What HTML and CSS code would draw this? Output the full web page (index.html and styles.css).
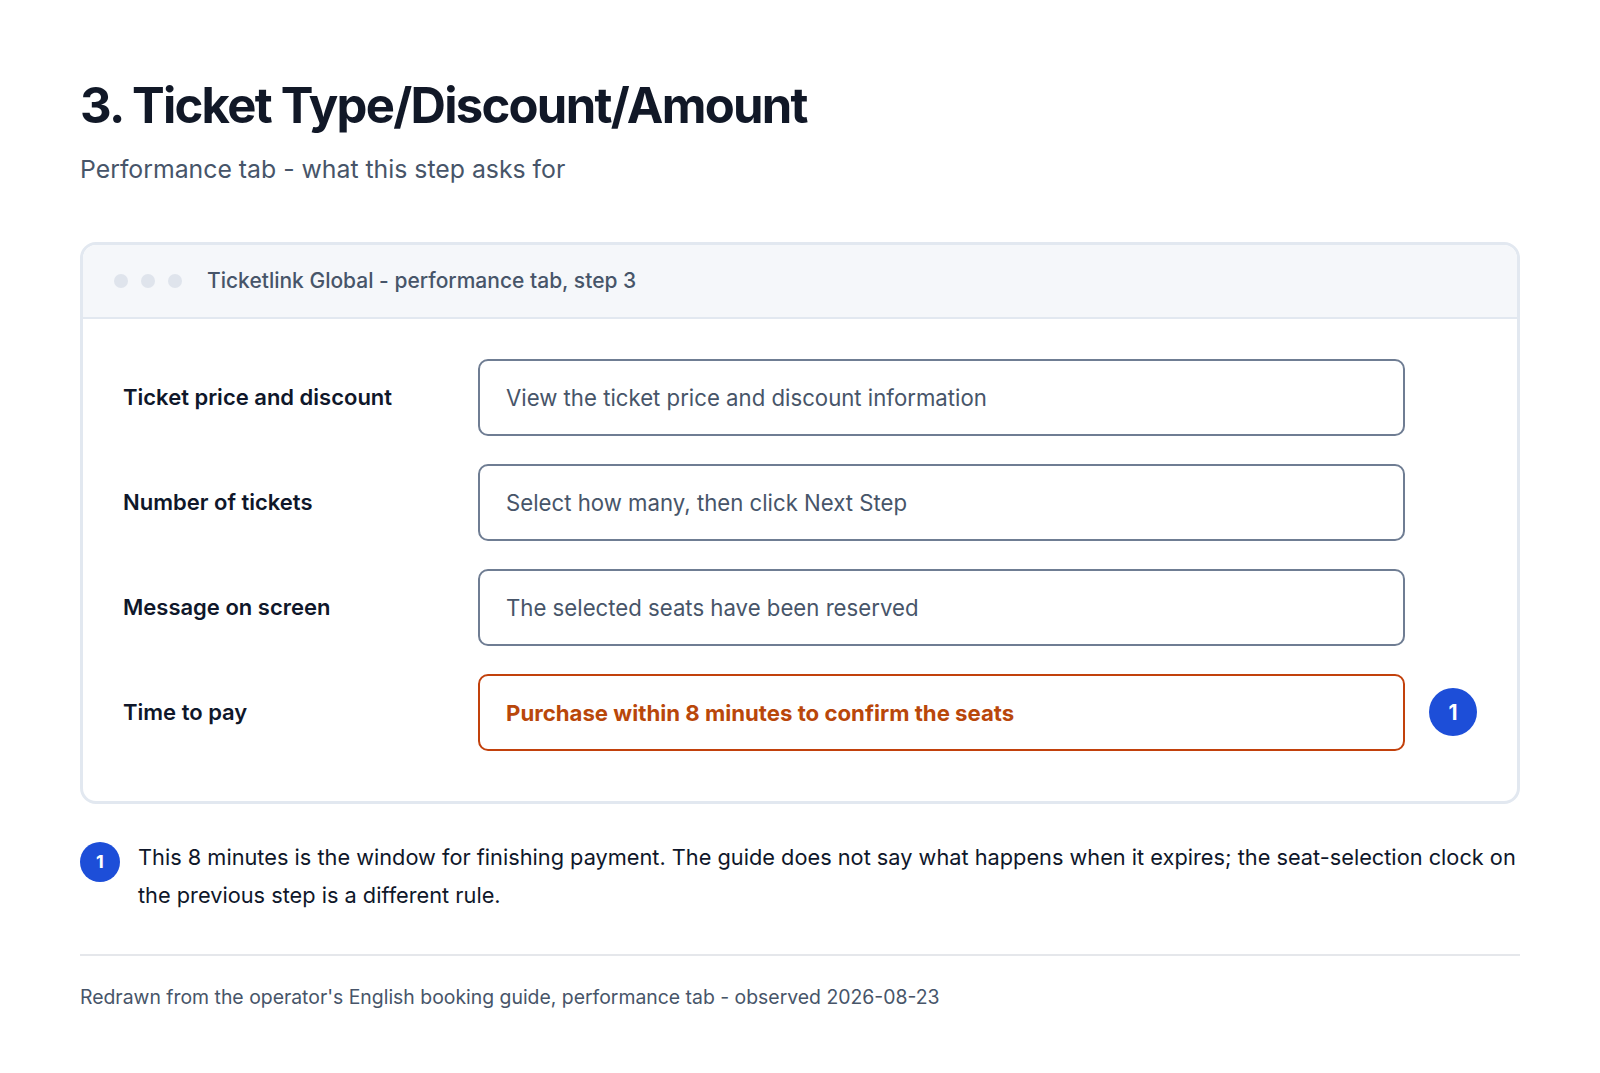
FILE: index.html
```html
<!DOCTYPE html>
<html lang="en">
<head>
    <meta charset="UTF-8">
    <meta name="viewport" content="width=device-width, initial-scale=1.0">
    <title>3. Ticket Type/Discount/Amount</title>
    <link rel="stylesheet" href="styles.css">
</head>
<body>
    <div class="page">
        <h1>3. Ticket Type/Discount/Amount</h1>
        <p class="subtitle">Performance tab - what this step asks for</p>

        <div class="window">
            <div class="window-bar">
                <span class="dot"></span>
                <span class="dot"></span>
                <span class="dot"></span>
                <span class="window-title">Ticketlink Global - performance tab, step 3</span>
            </div>
            <div class="window-body">
                <div class="field-row">
                    <div class="field-label">Ticket price and discount</div>
                    <div class="field-box">View the ticket price and discount information</div>
                    <div></div>
                </div>
                <div class="field-row">
                    <div class="field-label">Number of tickets</div>
                    <div class="field-box">Select how many, then click Next Step</div>
                    <div></div>
                </div>
                <div class="field-row">
                    <div class="field-label">Message on screen</div>
                    <div class="field-box">The selected seats have been reserved</div>
                    <div></div>
                </div>
                <div class="field-row">
                    <div class="field-label">Time to pay</div>
                    <div class="field-box warn">Purchase within 8 minutes to confirm the seats</div>
                    <div class="marker">1</div>
                </div>
            </div>
        </div>

        <div class="note">
            <div class="marker small">1</div>
            <p>This 8 minutes is the window for finishing payment. The guide does not say what happens when it expires; the seat-selection clock on the previous step is a different rule.</p>
        </div>

        <footer class="source">
            Redrawn from the operator's English booking guide, performance tab - observed 2026-08-23
        </footer>
    </div>
</body>
</html>
```

FILE: styles.css
```css
body {
    font-family: Inter, "Noto Sans", sans-serif;
    background-color: #ffffff;
    color: #0f172a;
    margin: 0;
    padding: 0;
}
.page {
    width: 1440px;
    margin: 0 auto;
    padding-top: 77px;
}
h1 {
    font-size: 49px;
    font-weight: 700;
    letter-spacing: -0.035em;
    line-height: 1.2;
    margin: 0;
    color: #111827;
}
.subtitle {
    font-size: 24.8px;
    color: #475569;
    margin: 16px 0 0;
    line-height: 1.4;
}
.window {
    margin-top: 55px;
    border: 3px solid #e2e8f0;
    border-radius: 16px;
    overflow: hidden;
}
.window-bar {
    display: flex;
    align-items: center;
    height: 72px;
    padding: 0 31px;
    background-color: #f5f7fa;
    border-bottom: 2px solid #e2e8f0;
}
.dot {
    width: 14px;
    height: 14px;
    border-radius: 50%;
    background-color: #dfe4ec;
    margin-right: 13px;
}
.window-title {
    margin-left: 12px;
    font-size: 21px;
    font-weight: 500;
    color: #475569;
}
.window-body {
    padding: 40px 40px 50px;
    display: flex;
    flex-direction: column;
    gap: 28px;
}
.field-row {
    display: grid;
    grid-template-columns: 331px 1fr 48px;
    column-gap: 24px;
    align-items: center;
}
.field-label {
    font-size: 22px;
    font-weight: 600;
    color: #0f172a;
}
.field-box {
    height: 77px;
    box-sizing: border-box;
    display: flex;
    align-items: center;
    padding: 0 26px;
    border: 2px solid #6f7d93;
    border-radius: 10px;
    font-size: 22.2px;
    color: #475569;
}
.field-box.warn {
    border-color: #c2410c;
    color: #b9470a;
    font-weight: 700;
}
.marker {
    width: 48px;
    height: 48px;
    border-radius: 50%;
    background-color: #1d4ed8;
    color: #ffffff;
    font-weight: 700;
    font-size: 21px;
    display: flex;
    align-items: center;
    justify-content: center;
}
.marker.small {
    width: 40px;
    height: 40px;
    flex-shrink: 0;
    font-size: 18px;
    margin-top: 4px;
}
.note {
    display: flex;
    gap: 18px;
    margin-top: 34px;
}
.note p {
    margin: 0;
    font-size: 21.75px;
    line-height: 38px;
    color: #0f172a;
}
.source {
    margin-top: 40px;
    border-top: 2px solid #e5e7eb;
    padding-top: 29px;
    font-size: 19.4px;
    color: #475569;
}
```
